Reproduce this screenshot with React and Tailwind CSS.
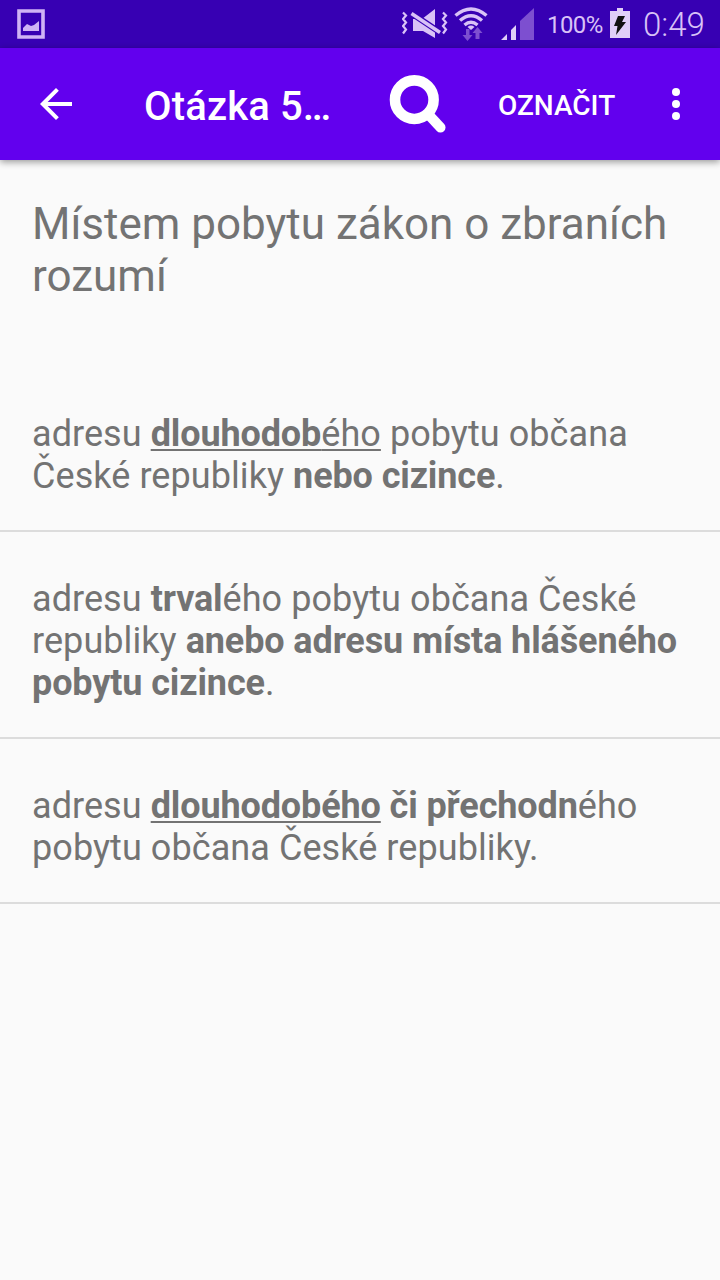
const PictureIcon = () => (
  <svg className="ml-[17px] mt-[9px]" width="28" height="30" viewBox="0 0 28 30">
    <path d="M2 2h24v26H2z" fill="none" stroke="#cfb3f5" strokeWidth="3.6" />
    <path d="M6 22v-3l4-4 4 2 3-1 5-4v10z" fill="#cfb3f5" />
  </svg>
);

const MuteIcon = () => (
  <svg width="46" height="32" viewBox="402 8 46 32" fill="#d9c2f7">
    <path d="M413 19h9l13-10v29l-12-7h-10z" />
    <path d="M409.500 12l33 22" stroke="#3700b3" strokeWidth="6" />
    <path d="M411.500 13.500l28.500 19" stroke="#d9c2f7" strokeWidth="3.600" />
    <path
      d="M403 12.500l3 3-3 3.500 3 3.500-3 3.500 3 3.500-3 4M443 12.500l3 3-3 3.500 3 3.500-3 3.500 3 3.500-3 4"
      fill="none"
      stroke="#d9c2f7"
      strokeWidth="2.200"
    />
  </svg>
);

const WifiIcon = () => (
  <svg className="ml-[6px]" width="34" height="36" viewBox="454 6 34 36">
    <g fill="none" stroke="#d9c2f7" strokeWidth="3.400">
      <path d="M455.500 15.500q15.500-13 31 0" />
      <path d="M460 20.500q11-9.500 22 0" />
      <path d="M464.500 25q6.500-5.500 13 0" />
    </g>
    <path d="M467.500 27q3.500-2.800 7 0l-3.500 3z" fill="#d9c2f7" />
    <path
      d="M466 29h3.500v6h3l-5 6-5-6h3.500zM475.500 39v-6h-3l5-6 5 6h-3v6z"
      fill="#7d4fd0"
    />
  </svg>
);

const SignalIcon = () => (
  <svg className="ml-[12px]" width="36" height="34" viewBox="500 7 36 34">
    <path d="M501 40l6-6v6zM511 40V30l5-5v15z" fill="#e0cff8" />
    <path d="M520 40V21l14-13v32z" fill="#7d4fd0" />
  </svg>
);

const BatteryIcon = () => (
  <svg className="absolute left-[610px] top-[8px]" width="20" height="31" viewBox="0 0 20 31">
    <path d="M7 0h6v3h7v27H0V3h7z" fill="#e0cff8" />
    <path d="M8 8h7l-3 6h4L6 27l1.500-9H4z" fill="#111" />
  </svg>
);

const StatusBar = () => (
  <div className="relative flex h-12 bg-[#3700b3] text-[#d9c2f7]">
    <PictureIcon />
    <div className="ml-[357px] flex">
      <div className="pt-2"><MuteIcon /></div>
      <div className="pt-1.5"><WifiIcon /></div>
      <div className="pt-[7px]"><SignalIcon /></div>
    </div>
    <span className="ml-[11px] mt-[11px] text-[24px] leading-[28px] tracking-[-0.6px]">100%</span>
    <BatteryIcon />
    <span className="absolute left-[643px] top-[6px] text-[33px] leading-[38px] font-light">0:49</span>
  </div>
);

const AppBar = () => (
  <div className="relative flex h-28 items-start bg-[#6200ee] text-white shadow-[0_2px_7px_rgba(0,0,0,0.4)]">
    <svg className="ml-8 mt-8" width="48" height="48" viewBox="0 0 24 24" fill="currentColor">
      <path d="M20 11H7.830l5.590-5.590L12 4l-8 8 8 8 1.410-1.410L7.830 13H20v-2z" />
    </svg>
    <h1 className="ml-16 mt-[35px] w-[200px] text-[40px] leading-[48px] font-medium tracking-[0.15px]">Otázka 5…</h1>
    <svg className="ml-[44px] mt-[26px]" width="60" height="60" viewBox="0 0 60 60">
      <circle cx="26.300" cy="25.700" r="19.300" fill="none" stroke="#fff" strokeWidth="10.600" />
      <path d="M40 40l12.500 13.500" stroke="#fff" strokeWidth="10" strokeLinecap="round" />
    </svg>
    <button className="ml-[50px] mt-[41px] w-[120px] text-left text-[28px] leading-[33px] font-medium">OZNAČIT</button>
    <svg className="ml-[34px] mt-8" width="48" height="48" viewBox="0 0 48 48" fill="currentColor">
      <circle cx="24" cy="12" r="4" />
      <circle cx="24" cy="24" r="4" />
      <circle cx="24" cy="36" r="4" />
    </svg>
  </div>
);

const Answer = ({ children }) => (
  <li className="border-b-2 border-[#dcdcdc] px-8 pt-[46px] pb-[33px] text-[36px] leading-[42px] tracking-[0.07px] whitespace-nowrap">
    {children}
  </li>
);

const Bold = ({ children }) => <b className="tracking-[-0.12px]">{children}</b>;

const underline = 'underline decoration-2 underline-offset-[3px] [text-decoration-skip-ink:none]';

const App = () => {
  return (
    <div className="h-[1280px] w-[720px] overflow-hidden bg-[#fafafa] font-[Roboto,sans-serif] text-[#737373]">
      <StatusBar />
      <AppBar />
      <h2 className="mt-[38px] px-8 text-[44px] leading-[52px] whitespace-nowrap">
        Místem pobytu zákon o zbraních<br />
        rozumí
      </h2>
      <ul className="mt-[65px]">
        <Answer>
          adresu <span className={underline}><Bold>dlouhodob</Bold>ého</span> pobytu občana<br />
          České republiky <Bold>nebo cizince</Bold>.
        </Answer>
        <Answer>
          adresu <Bold>trval</Bold>ého pobytu občana České<br />
          republiky <Bold>anebo adresu místa hlášeného</Bold><br />
          <Bold>pobytu cizince</Bold>.
        </Answer>
        <Answer>
          adresu <Bold><span className={underline}>dlouhodobého</span> či přechodn</Bold>ého<br />
          pobytu občana České republiky.
        </Answer>
      </ul>
    </div>
  );
};

export default App;
